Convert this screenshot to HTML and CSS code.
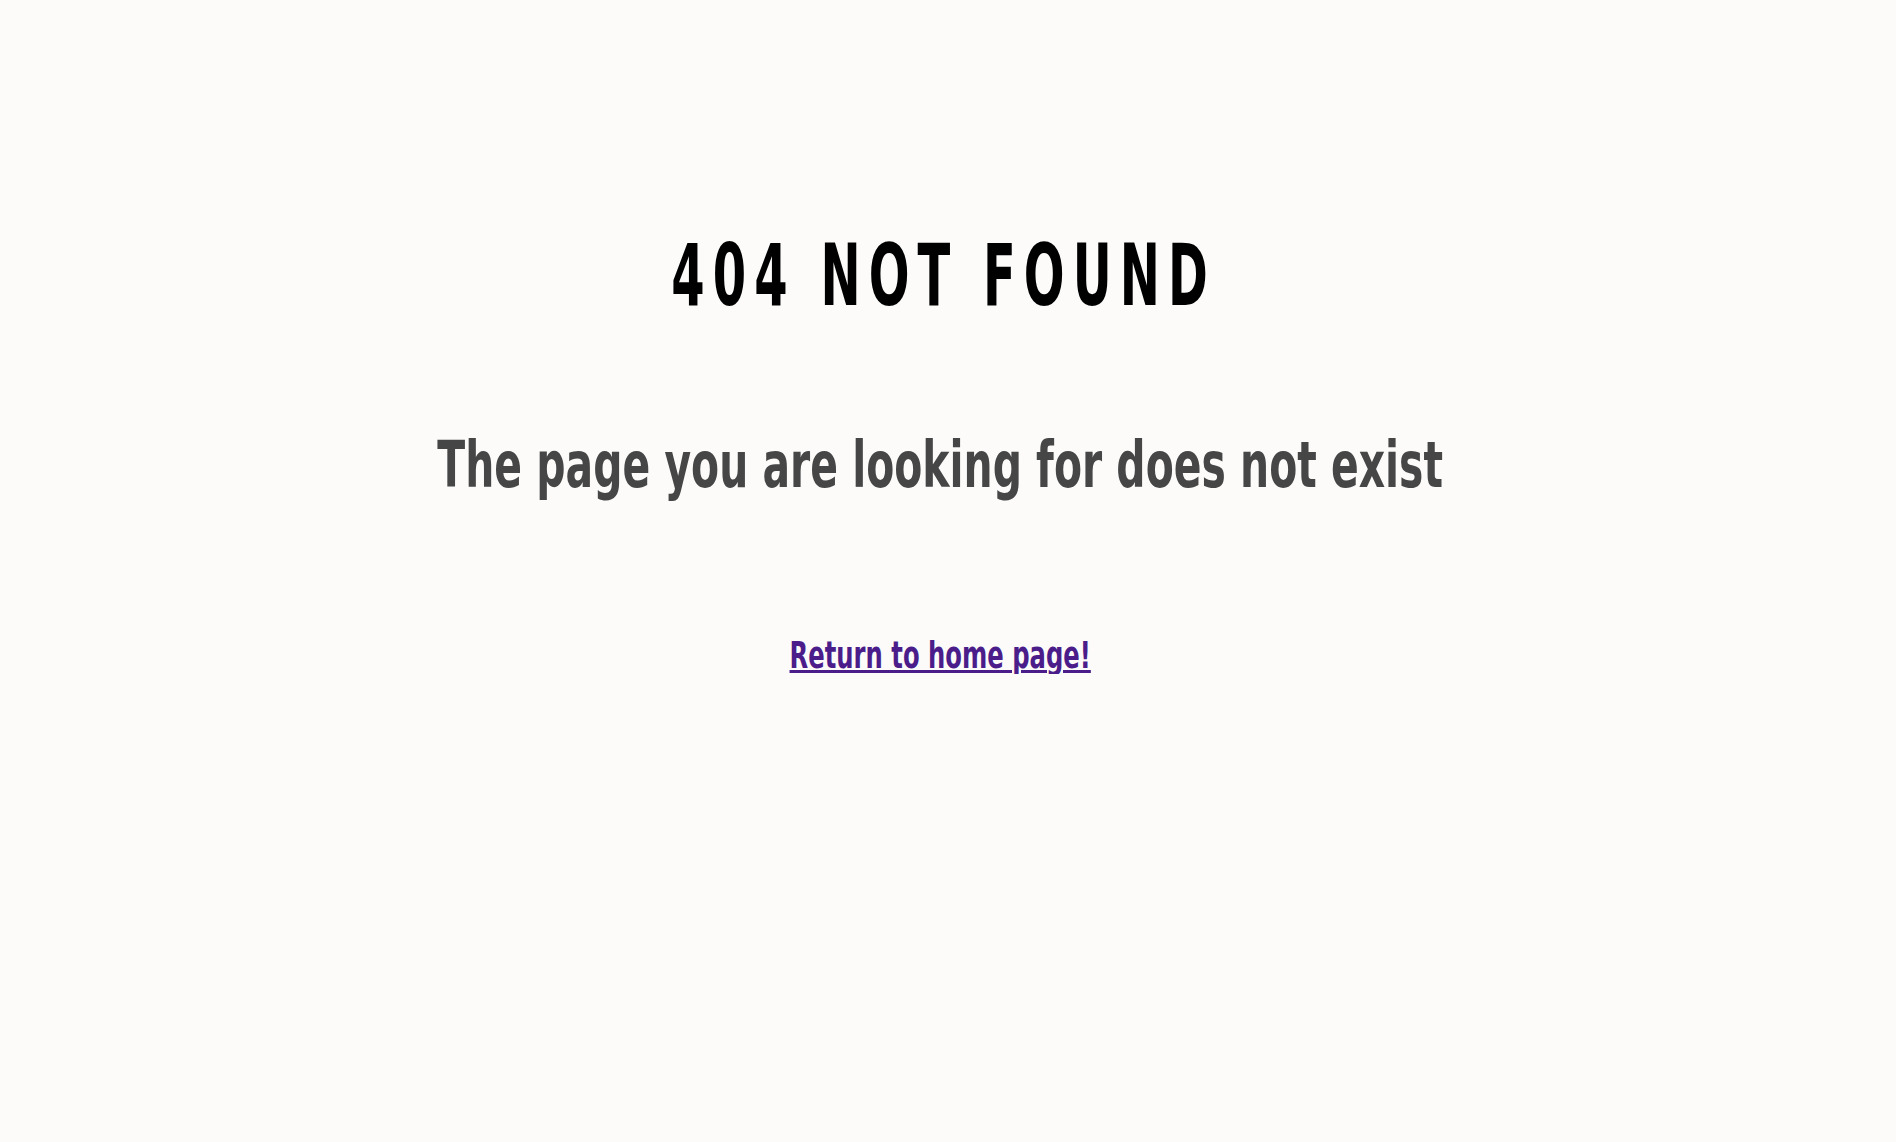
FILE: index.html
```html
<!DOCTYPE html>
<html lang="en">
<head>
<meta charset="utf-8">
<title>404 Not Found</title>
<link rel="stylesheet" href="styles.css">
</head>
<body>
<main class="page">
  <h1 class="title">404 NOT FOUND</h1>
  <h2 class="subtitle">The page you are looking for does not exist</h2>
  <a class="home-link" href="#">Return to home page!</a>
</main>
</body>
</html>
```

FILE: styles.css
```css
html, body {
  margin: 0;
  padding: 0;
  background: #fcfbfa;
}
body {
  font-family: "DejaVu Sans Condensed", "DejaVu Sans", sans-serif;
}
.page {
  display: flex;
  flex-direction: column;
  align-items: center;
  padding: 232px 16px 0 0;
}
.title {
  margin: 0;
  font-size: 86px;
  font-weight: 700;
  letter-spacing: 13px;
  text-indent: 13px;
  color: #000;
  line-height: 1;
  transform: scaleX(0.62);
  white-space: nowrap;
}
.subtitle {
  margin: 115px 0 0;
  font-size: 64px;
  font-weight: 700;
  color: #464646;
  line-height: 1;
  transform: scaleX(0.71);
  white-space: nowrap;
}
.home-link {
  margin-top: 139px;
  font-size: 38px;
  font-weight: 700;
  color: #4b1d8a;
  text-decoration: underline;
  text-decoration-thickness: 3px;
  line-height: 1;
  transform: scaleX(0.71);
  white-space: nowrap;
}
```
